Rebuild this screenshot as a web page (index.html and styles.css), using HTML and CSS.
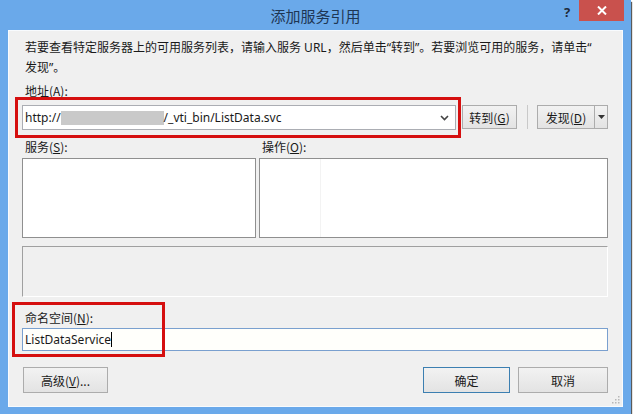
FILE: index.html
```html
<!DOCTYPE html>
<html lang="zh-CN">
<head>
    <meta charset="UTF-8">
    <meta name="viewport" content="width=device-width, initial-scale=1.0">
    <title>添加服务引用</title>
    <link rel="stylesheet" href="styles.css">
</head>
<body>
    <div class="window">
        <div class="titlebar">
            <span class="title">添加服务引用</span>
            <span class="help">?</span>
            <span class="close">
                <svg width="10" height="9" viewBox="0 0 10 9"><path d="M1 0.5 L9 8.5 M9 0.5 L1 8.5" stroke="#fff" stroke-width="2"/></svg>
            </span>
        </div>
        <div class="client">
            <p class="intro">若要查看特定服务器上的可用服务列表，请输入服务 URL，然后单击“转到”。若要浏览可用的服务，请单击“<br>发现”。</p>

            <label class="field-label">地址(<u>A</u>):</label>
            <div class="address-row">
                <div class="combo">
                    <span class="combo-text">http://<span class="blur"></span>/_vti_bin/ListData.svc</span>
                    <svg class="chevron" width="9" height="6" viewBox="0 0 9 6"><path d="M1 1 L4.5 4.5 L8 1" fill="none" stroke="#444" stroke-width="1.6"/></svg>
                </div>
                <button class="btn btn-go">转到(<u>G</u>)</button>
                <span class="sep"></span>
                <div class="split">
                    <button class="btn split-main">发现(<u>D</u>)</button>
                    <button class="btn split-arrow">
                        <svg width="7" height="4" viewBox="0 0 7 4"><path d="M0 0 H7 L3.5 4 Z" fill="#333"/></svg>
                    </button>
                </div>
            </div>

            <div class="lists">
                <div class="list-col">
                    <label class="field-label">服务(<u>S</u>):</label>
                    <div class="listbox"></div>
                </div>
                <div class="list-col">
                    <label class="field-label">操作(<u>O</u>):</label>
                    <div class="listbox listbox-ops"></div>
                </div>
            </div>

            <div class="status-box"></div>

            <label class="field-label ns-label">命名空间(<u>N</u>):</label>
            <div class="ns-input">ListDataService<span class="caret"></span></div>

            <div class="footer">
                <button class="btn btn-adv">高级(<u>V</u>)...</button>
                <button class="btn btn-ok">确定</button>
                <button class="btn btn-cancel">取消</button>
            </div>

            <span class="annot annot-address"></span>
            <span class="annot annot-ns"></span>
            <svg class="grip" width="9" height="9" viewBox="0 0 9 9">
                <rect x="7" y="1" width="1.5" height="1.5" fill="#b8b8b8"/>
                <rect x="4" y="4" width="1.5" height="1.5" fill="#b8b8b8"/>
                <rect x="7" y="4" width="1.5" height="1.5" fill="#b8b8b8"/>
                <rect x="1" y="7" width="1.5" height="1.5" fill="#b8b8b8"/>
                <rect x="4" y="7" width="1.5" height="1.5" fill="#b8b8b8"/>
                <rect x="7" y="7" width="1.5" height="1.5" fill="#b8b8b8"/>
            </svg>
        </div>
    </div>
</body>
</html>
```

FILE: styles.css
```css
*, ::before, ::after {
    margin: 0;
    padding: 0;
    box-sizing: border-box;
}

body {
    background-color: #fff;
    font-family: "Segoe UI", "Noto Sans", "Noto Sans CJK SC", sans-serif;
    font-size: 12px;
    color: #1a1a1a;
}

.window {
    width: 631px;
    height: 414px;
    background-color: #6aa9ea;
    box-shadow: 1px 2px 1px #5a5a5a;
    display: flex;
    flex-direction: column;
}

.titlebar {
    height: 30px;
    position: relative;
    display: flex;
    justify-content: center;
    align-items: center;
}

.title {
    font-family: "Noto Sans CJK SC", sans-serif;
    font-size: 15px;
    color: #1e3654;
}

.help {
    position: absolute;
    left: 564px;
    top: 3px;
    font-weight: bold;
    font-size: 13px;
    color: #1e2a3a;
}

.close {
    position: absolute;
    left: 579px;
    top: 0;
    width: 45px;
    height: 21px;
    background-color: #c9514d;
    display: flex;
    justify-content: center;
    align-items: center;
}

.client {
    flex: 1;
    margin: 0 8px 7px 8px;
    background-color: #f0f0f0;
    border: 1px solid #f8fbfe;
    padding: 7px 14px 0 13px;
    position: relative;
    display: flex;
    flex-direction: column;
}

.intro {
    line-height: 20px;
    padding-left: 3px;
    white-space: nowrap;
}

.field-label {
    display: block;
    font-family: "Noto Sans CJK SC", sans-serif;
    line-height: 16px;
    padding-left: 3px;
}

.intro + .field-label {
    margin-top: 5px;
}

.address-row {
    margin-top: 6px;
    display: flex;
    align-items: flex-start;
}

.combo {
    flex: 1;
    height: 25px;
    background-color: #fff;
    border: 1px solid #abadb3;
    display: flex;
    align-items: center;
    justify-content: space-between;
    padding: 0 6px 0 2px;
}

.combo-text {
    display: flex;
    align-items: center;
}

.blur {
    display: inline-block;
    width: 103px;
    height: 14px;
    background-color: #c9c9c9;
}

.btn {
    font-family: "Noto Sans CJK SC", sans-serif;
    font-size: 12px;
    color: #1a1a1a;
    background: linear-gradient(#f2f2f2, #e3e3e3);
    border: 1px solid #acacac;
    height: 24px;
}

.btn-go {
    width: 55px;
    margin-left: 6px;
}

.sep {
    width: 1px;
    height: 24px;
    background-color: #c9c9c9;
    margin: 0 9px 0 10px;
}

.split {
    display: flex;
}

.split-main {
    width: 58px;
}

.split-arrow {
    width: 13px;
    border-left: none;
    display: flex;
    align-items: center;
    justify-content: center;
}

.lists {
    margin-top: 9px;
    display: grid;
    grid-template-columns: 234px 1fr;
    gap: 3px;
}

.listbox {
    margin-top: 3px;
    height: 80px;
    background-color: #fff;
    border: 1px solid #8f8f8f;
}

.listbox-ops {
    background: linear-gradient(90deg, #fff 60px, #f3f3f3 60px, #f3f3f3 61px, #fff 61px);
}

.status-box {
    margin-top: 8px;
    height: 51px;
    border-top: 1px solid #a0a0a0;
    border-left: 1px solid #a0a0a0;
    border-right: 1px solid #fff;
    border-bottom: 1px solid #fff;
}

.ns-label {
    margin-top: 13px;
}

.ns-input {
    margin-top: 2px;
    height: 23px;
    background-color: #fffffb;
    border: 1px solid #7aa0cf;
    display: flex;
    align-items: center;
    padding-left: 2px;
}

.caret {
    display: inline-block;
    width: 1px;
    height: 15px;
    background-color: #000;
}

.footer {
    margin-top: 16px;
    display: flex;
    gap: 8px;
}

.footer .btn {
    height: 26px;
}

.btn-adv {
    width: 85px;
    margin-left: 1px;
    margin-right: auto;
}

.btn-ok {
    width: 87px;
    border-color: #3c7fb1;
}

.btn-cancel {
    width: 90px;
}

.annot {
    position: absolute;
    border: 3px solid #d50f0f;
}

.annot-address {
    left: 6px;
    top: 66px;
    width: 446px;
    height: 41px;
}

.annot-ns {
    left: 3px;
    top: 271px;
    width: 153px;
    height: 55px;
}

.grip {
    position: absolute;
    right: 2px;
    bottom: 2px;
}
```
